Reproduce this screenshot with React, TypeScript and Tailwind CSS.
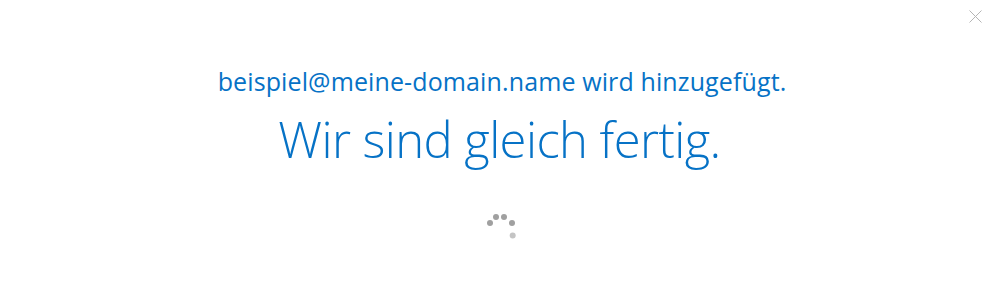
import React from "react";

export default function App() {
  const dots = [
    { x: 490, y: 223, c: "#a0a0a0" },
    { x: 496, y: 217, c: "#a0a0a0" },
    { x: 504, y: 217, c: "#a0a0a0" },
    { x: 512, y: 223, c: "#a0a0a0" },
    { x: 512.7, y: 235.5, c: "#c4c4c4" },
  ];
  return (
    <div className="relative w-[1004px] h-[301px] bg-white overflow-hidden" style={{ fontFamily: '"Open Sans", "Noto Sans", sans-serif' }}>
      <button className="absolute left-[968px] top-[9px] w-[15px] h-[15px]">
        <svg width="15" height="15" viewBox="0 0 15 15">
          <path d="M1.5 1.5 L13.5 13.5 M13.5 1.5 L1.5 13.5" stroke="#b5b5b5" strokeWidth="1" />
        </svg>
      </button>
      <div className="flex flex-col items-center pt-[63px]">
        <div className="text-[25px] leading-[36px] text-[#0672c6] tracking-[0.12px] whitespace-nowrap">
          beispiel@meine-domain.name wird hinzugefügt.
        </div>
        <div className="mt-[10px] mr-[5px] text-[49px] leading-[60px] font-light text-[#0672c6] tracking-[-0.6px] whitespace-nowrap">
          Wir sind gleich fertig.
        </div>
        <div className="relative mt-[43px] w-[30px] h-[26px]">
          <svg width="1004" height="301" className="absolute" style={{ left: -487, top: -212 }}>
            {dots.map((d, i) => (
              <circle key={i} cx={d.x} cy={d.y} r={3} fill={d.c} />
            ))}
          </svg>
        </div>
      </div>
    </div>
  );
}
